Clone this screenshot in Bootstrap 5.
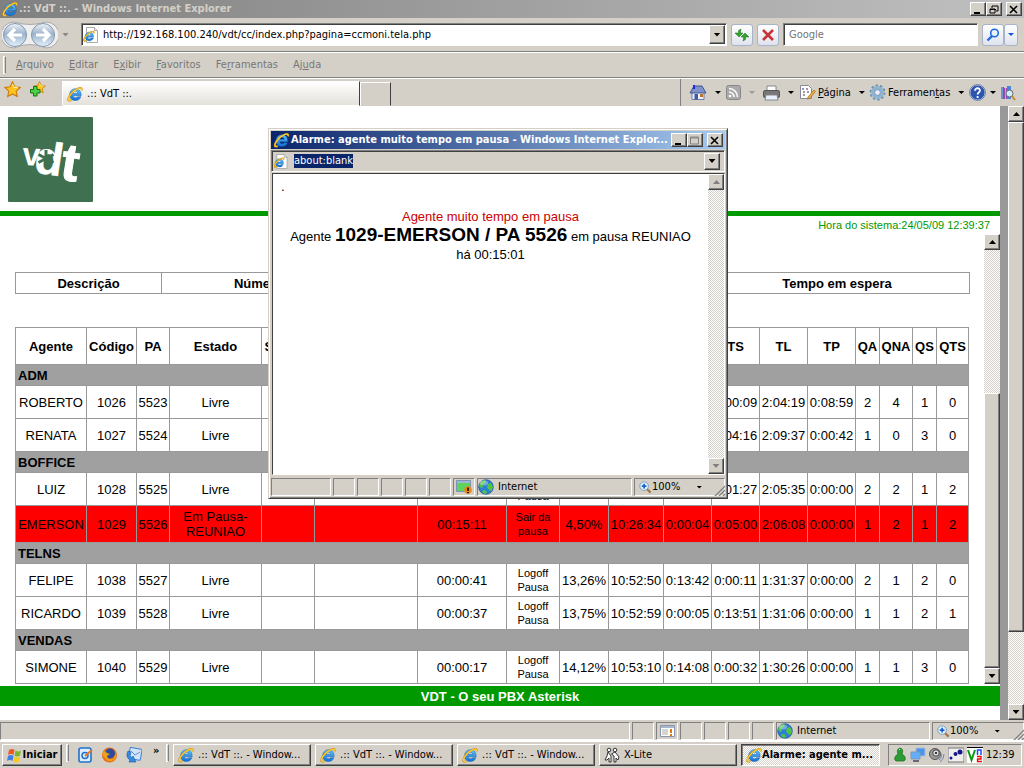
<!DOCTYPE html>
<html lang="pt-BR">
<head>
<meta charset="utf-8">
<meta name="viewport" content="width=device-width, initial-scale=1">
<title>.:: VdT ::. - Windows Internet Explorer</title>
<link href="https://cdn.jsdelivr.net/npm/bootstrap@5.3.0/dist/css/bootstrap.min.css" rel="stylesheet">
<style>
:root{--face:#d4d0c8;--shade:#808080;--dark:#404040;--line:#999}
body{font:11px/14px "DejaVu Sans Condensed","Noto Sans",sans-serif;color:#000;background:var(--face)}
button,input{font:inherit;color:inherit;padding:0;border:0;border-radius:0;background:none}
a{color:inherit;text-decoration:none}
svg{display:block;flex:none}
.raised{border:1px solid;border-color:#fff var(--dark) var(--dark) #fff;box-shadow:inset -1px -1px var(--shade);background:var(--face)}
.sunk{border:1px solid;border-color:var(--shade) #fff #fff var(--shade)}
.field{border:1px solid;border-color:var(--shade) #fff #fff var(--shade);box-shadow:inset 1px 1px var(--dark);background:#fff}
.dither{background:repeating-conic-gradient(#fff 0 25%,var(--face) 0 50%) 0 0/2px 2px}
.center{display:flex;align-items:center;justify-content:center}
.arrow{width:7px;height:4px;background:currentColor;clip-path:polygon(0 0,100% 0,50% 100%);flex:none}
.arrow-sm{width:6px;height:3px}
.arrow.up{transform:rotate(180deg)}
.titlebar{height:18px;padding:0 2px;gap:1px;font-weight:bold}
.titlebar.idle{background:linear-gradient(90deg,#808080,#c0c0c0);color:var(--face)}
.titlebar.live{background:linear-gradient(90deg,#0a246a,#a6caf0);color:#fff}
.capbtn{width:16px;height:14px}
.ruled{border-bottom:1px solid var(--shade);box-shadow:0 1px #fff}
.addrbar{height:34px;padding:0 6px 0 2px}
.urlbox{height:23px;padding-left:1px}
.dropbtn{width:16px;height:19px;margin-right:1px}
.softbtn{height:22px;border:1px solid #a9b3c9;border-radius:3px;background:linear-gradient(#fff,#dfe3ee)}
.menubar{height:25px;color:#777;gap:15px;margin-top:1px}
.grip{width:3px;height:18px;border:1px solid;border-color:#fff var(--shade) #fff #fff}
.tabrow{height:28px}
.tab-on{width:298px;height:25px;border:1px solid;border-color:#fff var(--dark) transparent #fff;background:linear-gradient(#fff,#e4e1db)}
.tab-new{width:31px;height:24px;border:1px solid;border-color:#fff var(--dark) transparent #fff}
.tools{display:grid;grid-template-columns:37px 37px 36px 70px 100px 31px 24px;border-left:1px solid var(--shade);padding-left:8px;height:27px;align-items:center}
.tools button{display:flex;align-items:center;text-align:left}
.site{font:13px/15px "Liberation Sans",Arial,sans-serif;background:#fff}
.site-head{height:105px;padding:11px 8px}
.stripe{height:5px;background:#090}
.clock{height:18px;font-size:11px;line-height:19px;color:#090;padding-right:10px}
.monitor{padding:38px 15px 0}
.site-foot{height:20px;line-height:22px;background:#090;color:#fff;margin:2px 0 14px;font-weight:bold;text-align:center}
.frame-edge{flex:none;width:8px;background:var(--line)}
.bar{flex:none;width:16px}
.bar button{width:16px;height:16px}
.grid-lines{width:100%;table-layout:fixed;border-collapse:collapse;text-align:center}
.grid-lines td,.grid-lines th{border:1px solid var(--line);padding:0;white-space:nowrap}
.queue th{height:21px}
.queue{margin-bottom:33px}
.agents tr{height:33px}
.agents thead tr,.agents .paused{height:37px}
.agents .group{height:21px;background:#a0a0a0;text-align:left}
.agents .group th{padding-left:2px}
.agents .paused{background:#f00}
.agents .act{font-size:11px;line-height:14px}
.statusbar{height:21px;padding-top:2px;gap:2px;border-bottom:1px solid #fff}
.pane{height:18px}
.pane.cell{width:22px}
.grow-tip{position:absolute;right:0;bottom:0}
.taskbar{height:27px;border-top:1px solid #fff;padding:2px 2px 0;gap:4px;align-items:flex-start}
.task{flex:0 1 138px;height:22px;padding:0 4px;text-align:left;overflow:hidden}
.task.on{flex-basis:139px;border-color:var(--dark) #fff #fff var(--dark);box-shadow:inset 1px 1px var(--shade);font-weight:bold}
.start{width:60px;height:22px;font-weight:bold}
.quick{width:89px;height:22px;gap:7px;padding-left:5px}
.tray{width:134px;height:22px;gap:3px;padding-left:4px}
.popup{position:absolute;left:268px;top:128px;width:460px;height:371px;padding:2px;background:var(--face);border:1px solid;border-color:var(--face) var(--dark) var(--dark) var(--face);box-shadow:inset 1px 1px #fff,inset -1px -1px var(--shade)}
.pop-url{height:22px;margin-top:1px;border:1px solid;border-color:var(--shade) #fff #fff var(--shade);box-shadow:inset 1px 1px var(--dark)}
.pop-url input{width:59px;height:14px;background:#0a246a;color:#fff}
.pop-url .raised{width:16px;height:17px}
.pop-body{border:1px solid;border-color:var(--dark) #fff #fff var(--dark);margin:1px 0 3px 1px}
.alarm{font:13px/18px "Liberation Sans",Arial,sans-serif;text-align:center;padding:4px 8px}
.alarm strong{font-size:19px}
.alarm .warn{color:#c00;margin-top:12px}
</style>
</head>
<body class="d-flex flex-column vh-100 overflow-hidden">
<svg width="0" height="0" class="position-absolute">
<defs>
<linearGradient id="gB" x1="0" y1="0" x2="0" y2="1"><stop offset="0" stop-color="#5cc4fa"/><stop offset="1" stop-color="#1470d4"/></linearGradient>
<linearGradient id="gN" x1="0" y1="0" x2="0" y2="1"><stop offset="0" stop-color="#eef4fa"/><stop offset=".45" stop-color="#9db3cc"/><stop offset="1" stop-color="#e3f1fc"/></linearGradient>
</defs>
<symbol id="ie" viewBox="0 0 16 16"><path d="M14.2 9.800H6.300c.2 1.400 1.100 2 2.300 2 1 0 1.700-.4 2.100-1h3.200c-.8 2.400-2.700 3.700-5.400 3.700-3.600 0-5.900-2.300-5.900-5.800 0-3.400 2.300-6 5.900-6 3.700 0 5.800 2.500 5.700 7.100zM10.700 7.300C10.600 6 9.800 5.200 8.500 5.200S6.500 6 6.300 7.300z" fill="url(#gB)" stroke="#0b4fa5" stroke-width=".4"/><path d="M14.500 4.400c.8-2.500-.8-3.200-3.600-1.900C7 4.300 2.800 8.600 1.500 12c-.9 2.500.4 3.300 2.900 2.100" fill="none" stroke="#d08e05" stroke-width="1.900"/><path d="M14.500 4.200c.6-2.200-.8-2.700-3.400-1.500C7 4.600 3 8.600 1.600 12c-.8 2.200.3 2.800 2.400 2" fill="none" stroke="#ffd23c" stroke-width="1.100"/></symbol>
<symbol id="iepage" viewBox="0 0 16 16"><path d="M3.500.5h8l3 3v12h-11z" fill="#fff" stroke="#aaa"/><path d="M11.500.5v3h3" fill="#eee" stroke="#aaa"/><svg x="0" y="3" width="12" height="12"><use href="#ie"/></svg></symbol>
<symbol id="globe" viewBox="0 0 16 16"><circle cx="8" cy="8" r="7.300" fill="#2d7fd6" stroke="#1c4c9c" stroke-width=".7"/><path d="M3 3c2-2 4-2 5-1.500L7 4 4.500 5.500 5 8 3 9 1.200 7C1.300 5 2 4 3 3zM10 5l3-1 2 4-1.500 4L11 11 9 8zM5 11l3 .5L9 14l-2 1-3-2z" fill="#4fc544"/><ellipse cx="6" cy="4" rx="4" ry="2.500" fill="#fff" opacity=".35"/></symbol>
<symbol id="mag" viewBox="0 0 14 14"><path d="M8 8l4.500 4.500" stroke="#a8763f" stroke-width="2.400"/><circle cx="5.500" cy="5.500" r="4.600" fill="#e1effb" stroke="#7d98b5"/><path d="M5.500 3v5M3 5.500h5" stroke="#1263c9" stroke-width="1.800"/></symbol>
<symbol id="tip" viewBox="0 0 12 12"><path d="M1 12L12 1M5 12l7-7M9 12l3-3" stroke="#fff" stroke-width="1"/><path d="M2 12L12 2M6 12l6-6M10 12l2-2" stroke="#808080" stroke-width="1.500"/></symbol>
<symbol id="star" viewBox="0 0 16 16"><path d="M8 .8l2.200 4.600 5 .7-3.700 3.500 1 5L8 12.200l-4.500 2.400 1-5L.8 6.100l5-.7z" fill="#ffc321" stroke="#cb7a07"/><path d="M8 2.500l1.300 3.500H13" stroke="#ffed9b" fill="none"/></symbol>
</svg>

<header>
<div class="titlebar idle d-flex align-items-center">
<svg width="16" height="16"><use href="#ie"/></svg><span class="flex-fill">.:: VdT ::. - Windows Internet Explorer</span>
<div class="d-flex">
<button class="raised capbtn center" aria-label="Minimizar"><svg width="10" height="9"><path d="M1 7h6v2H1z"/></svg></button>
<button class="raised capbtn center" aria-label="Restaurar"><svg width="10" height="9"><path d="M3 1h6v5H7M3 1v2M1 4h5v4H1zM1 4.500h6" fill="none" stroke="#000"/></svg></button>
<button class="raised capbtn center ms-1" aria-label="Fechar"><svg width="10" height="9"><path d="M1 1l7 7M8 1L1 8" stroke="#000" stroke-width="1.600"/></svg></button>
</div>
</div>
<div class="addrbar ruled d-flex align-items-center">
<svg width="56" height="28" viewBox="0 0 56 28"><path d="M12 1Q28 6 44 1A12 12 0 0144 27Q28 20 12 27A12 12 0 0112 1" fill="#efefef" stroke="#aaa"/><g fill="url(#gN)" stroke="#8496ac"><circle cx="13" cy="14" r="11.500"/><circle cx="41" cy="14" r="11.500"/></g><path d="M13 8l-6 6 6 6M7 14h13M41 8l6 6-6 6M47 14H34" fill="none" stroke="#fff" stroke-width="3.200"/></svg>
<i class="arrow ms-1 me-2" style="color:#888"></i>
<div class="urlbox field d-flex align-items-center flex-fill ms-1">
<svg width="16" height="16"><use href="#iepage"/></svg>
<input class="flex-fill ms-1" type="text" aria-label="Endereço" value="http://192.168.100.240/vdt/cc/index.php?pagina=ccmoni.tela.php">
<button class="raised dropbtn center" aria-label="Lista de endereços"><i class="arrow"></i></button>
</div>
<button class="softbtn center ms-1" style="width:22px" aria-label="Atualizar"><svg width="16" height="14"><path d="M7 1L4.500 2.500V5H1l4 4 4-4H6.500V3zM9 13l2.500-1.500V9H15l-4-4-4 4h2.500v2z" fill="#31a52b" stroke="#197014" stroke-width=".5"/></svg></button>
<button class="softbtn center ms-1" style="width:22px" aria-label="Parar"><svg width="12" height="12"><path d="M1 1l10 10M11 1L1 11" stroke="#c93338" stroke-width="2.600"/></svg></button>
<div class="urlbox field d-flex align-items-center ms-1" style="width:195px"><input class="w-100 ps-1" type="text" aria-label="Pesquisar" placeholder="Google"></div>
<div class="d-flex ms-1"><button class="softbtn center" style="width:22px" aria-label="Buscar"><svg width="14" height="14"><circle cx="8.500" cy="5" r="3.800" fill="#e8f3ff" stroke="#1e6be0" stroke-width="1.600"/><path d="M6 8l-4.500 4.500" stroke="#1e6be0" stroke-width="2.400"/></svg></button><button class="softbtn center" style="width:14px" aria-label="Opções de busca"><i class="arrow arrow-sm" style="color:#1356d8"></i></button></div>
</div>
<nav class="menubar ruled d-flex align-items-center">
<i class="grip" style="margin:0 -5px 0 3px"></i>
<a href="#"><u>A</u>rquivo</a><a href="#"><u>E</u>ditar</a><a href="#">E<u>x</u>ibir</a><a href="#"><u>F</u>avoritos</a><a href="#">Fe<u>r</u>ramentas</a><a href="#">Aj<u>u</u>da</a>
</nav>
<div class="tabrow d-flex align-items-end">
<button class="mb-1 ms-1 pb-1" aria-label="Favoritos"><svg width="17" height="17"><use href="#star"/></svg></button>
<button class="mb-1 ms-2 pb-1" aria-label="Adicionar a favoritos"><svg width="17" height="17"><svg x="4" width="13" height="13"><use href="#star"/></svg><path d="M4.500 5.500h3.500v3h3V12H8v3H4.500v-3h-3V8.500h3z" fill="#4fd046" stroke="#15780f"/></svg></button>
<div class="tab-on d-flex align-items-center ms-3 px-1"><svg width="16" height="16"><use href="#ie"/></svg><span class="ps-1">.:: VdT ::.</span></div>
<button class="tab-new" aria-label="Nova guia"></button>
<div class="tools ms-auto">
<button aria-label="Início"><svg width="18" height="17"><path d="M3 8v7.500h12V8" fill="#eef1f8" stroke="#6d7fa5"/><path d="M1 9l4-7h8l4 7z" fill="#7f93c8" stroke="#40568f"/><path d="M4 1h2v4H4z" fill="#22e"/><path d="M5.500 10H9v5.500H5.500z" fill="#3c5ba0"/><path d="M11 10h3v3h-3z" fill="#b8742b"/></svg><i class="arrow arrow-sm ms-2"></i></button>
<button aria-label="RSS"><svg width="15" height="15"><rect x=".5" y=".5" width="14" height="14" rx="2" fill="#aaa" stroke="#888"/><path d="M3 7a5 5 0 015 5M3 3.500A8.500 8.500 0 0111.500 12" fill="none" stroke="#fff" stroke-width="1.500"/><circle cx="4" cy="11" r="1.300" fill="#fff"/></svg><i class="arrow arrow-sm ms-2" style="color:#999"></i></button>
<button aria-label="Imprimir"><svg width="17" height="16"><path d="M4 1h9v5H4z" fill="#fff" stroke="#888"/><rect x=".5" y="5.500" width="16" height="7" rx="1.500" fill="#777" stroke="#555"/><path d="M3 10h11l1 5H2z" fill="#e8efff" stroke="#888"/></svg><i class="arrow arrow-sm ms-2"></i></button>
<button><svg width="17" height="17"><path d="M1.500 1.500h8l3 3v10h-11z" fill="#fff" stroke="#889"/><path d="M3 5h2M7 5h2M4 8h2M8 8h2M4 11h2" stroke="#335"/><path d="M15 6l1.500 1.500-6 7-2 .5.500-2z" fill="#f3b23b" stroke="#996515" stroke-width=".7"/></svg><span style="padding-left:2px"><u>P</u>ágina</span><i class="arrow arrow-sm ms-2"></i></button>
<button><svg width="17" height="17"><circle cx="8.500" cy="8.500" r="7" fill="none" stroke="#6692b5" stroke-width="2" stroke-dasharray="2.500 1.900"/><circle cx="8.500" cy="8.500" r="4.700" fill="none" stroke="#8fb4d0" stroke-width="3.500"/><circle cx="8.500" cy="8.500" r="2.800" fill="#eef" stroke="#557f9f" stroke-width=".7"/></svg><span style="padding-left:2px">Ferramen<u>t</u>as</span><i class="arrow arrow-sm ms-2"></i></button>
<button aria-label="Ajuda"><svg width="17" height="17"><circle cx="8.500" cy="8.500" r="7.500" fill="#2c56ad" stroke="#c5d2ea"/><circle cx="8.500" cy="8.500" r="7.900" fill="none" stroke="#26438c" stroke-width=".6"/><path d="M6 6.700C6 3.300 11.300 3.600 11 6.700 10.800 8.300 8.600 8.300 8.600 10.500M8.600 12v2" fill="none" stroke="#fff" stroke-width="1.800"/></svg><i class="arrow arrow-sm ms-1"></i></button>
<button aria-label="Pesquisa"><svg width="16" height="16"><path d="M1 2h3v12H1z" fill="#3d6fc4"/><path d="M4 3h3v11H4z" fill="#9a4bb0"/><path d="M7 1h4v13H7z" fill="#4a86d8"/><path d="M2 2v12M5.500 3v11" stroke="#dce8fa" stroke-width=".6"/><circle cx="9.500" cy="8.500" r="3.500" fill="#cfeffa" stroke="#667"/><path d="M12 11l3 4" stroke="#c78a2c" stroke-width="2"/></svg></button>
</div>
</div>
</header>

<main class="d-flex flex-fill site" style="min-height:0">
<div class="d-flex flex-column flex-fill" style="min-width:0">
<div class="site-head">
<svg width="85" height="85" role="img" aria-label="vdt"><rect width="85" height="85" fill="#3f704f" rx="1"/><g fill="#fff" stroke="#fff" font-family="Liberation Sans,sans-serif" font-weight="bold"><text x="14" y="48" font-size="32" stroke="none" transform="rotate(3 14 48)">v</text><text x="25" y="55" font-size="46" stroke-width=".5" transform="rotate(9 25 55)">d</text><text x="51" y="62" font-size="53" transform="rotate(9 51 62)">t</text></g><path d="M38 33v17M30.500 37.500l15 8M45.500 37.500l-15 8" stroke="#3f704f" stroke-width="3"/></svg>
</div>
<div class="stripe"></div>
<div class="clock text-end">Hora do sistema:24/05/09 12:39:37</div>
<div class="d-flex flex-fill" style="min-height:0">
<section class="monitor flex-fill overflow-hidden">
<table class="grid-lines queue">
<tr><th style="width:146px">Descrição</th><th style="width:194px">Número</th><th style="width:349px"></th><th style="width:265px">Tempo em espera</th></tr>
</table>
<table class="grid-lines agents">
<colgroup><col style="width:71px"><col style="width:50px"><col style="width:33px"><col style="width:92px"><col style="width:53px"><col style="width:103px"><col style="width:89px"><col style="width:53px"><col style="width:49px"><col style="width:55px"><col style="width:48px"><col style="width:48px"><col style="width:48px"><col style="width:48px"><col style="width:24px"><col style="width:33px"><col style="width:24px"><col style="width:32px"></colgroup>
<thead><tr><th>Agente</th><th>Código</th><th>PA</th><th>Estado</th><th>Serviço</th><th></th><th></th><th></th><th></th><th></th><th></th><th>TS</th><th>TL</th><th>TP</th><th>QA</th><th>QNA</th><th>QS</th><th>QTS</th></tr></thead>
<tbody>
<tr class="group"><th colspan="18">ADM</th></tr>
<tr><td>ROBERTO</td><td>1026</td><td>5523</td><td>Livre</td><td></td><td></td><td></td><td class="act"></td><td></td><td></td><td></td><td>0:00:09</td><td>2:04:19</td><td>0:08:59</td><td>2</td><td>4</td><td>1</td><td>0</td></tr>
<tr><td>RENATA</td><td>1027</td><td>5524</td><td>Livre</td><td></td><td></td><td></td><td class="act"></td><td></td><td></td><td></td><td>0:04:16</td><td>2:09:37</td><td>0:00:42</td><td>1</td><td>0</td><td>3</td><td>0</td></tr>
<tr class="group"><th colspan="18">BOFFICE</th></tr>
<tr><td>LUIZ</td><td>1028</td><td>5525</td><td>Livre</td><td></td><td></td><td></td><td class="act"><br><a href="#">Pausa</a></td><td></td><td></td><td></td><td>0:01:27</td><td>2:05:35</td><td>0:00:00</td><td>2</td><td>2</td><td>1</td><td>2</td></tr>
<tr class="paused"><td>EMERSON</td><td>1029</td><td>5526</td><td>Em Pausa-<br>REUNIAO</td><td></td><td></td><td>00:15:11</td><td class="act"><a href="#">Sair da<br>pausa</a></td><td>4,50%</td><td>10:26:34</td><td>0:00:04</td><td>0:05:00</td><td>2:06:08</td><td>0:00:00</td><td>1</td><td>2</td><td>1</td><td>2</td></tr>
<tr class="group"><th colspan="18">TELNS</th></tr>
<tr><td>FELIPE</td><td>1038</td><td>5527</td><td>Livre</td><td></td><td></td><td>00:00:41</td><td class="act"><a href="#">Logoff</a><br><a href="#">Pausa</a></td><td>13,26%</td><td>10:52:50</td><td>0:13:42</td><td>0:00:11</td><td>1:31:37</td><td>0:00:00</td><td>2</td><td>1</td><td>2</td><td>0</td></tr>
<tr><td>RICARDO</td><td>1039</td><td>5528</td><td>Livre</td><td></td><td></td><td>00:00:37</td><td class="act"><a href="#">Logoff</a><br><a href="#">Pausa</a></td><td>13,75%</td><td>10:52:59</td><td>0:00:05</td><td>0:13:51</td><td>1:31:06</td><td>0:00:00</td><td>1</td><td>1</td><td>2</td><td>1</td></tr>
<tr class="group"><th colspan="18">VENDAS</th></tr>
<tr><td>SIMONE</td><td>1040</td><td>5529</td><td>Livre</td><td></td><td></td><td>00:00:17</td><td class="act"><a href="#">Logoff</a><br><a href="#">Pausa</a></td><td>14,12%</td><td>10:53:10</td><td>0:14:08</td><td>0:00:32</td><td>1:30:26</td><td>0:00:00</td><td>1</td><td>1</td><td>3</td><td>0</td></tr>
</tbody>
</table>
</section>
<div class="bar d-flex flex-column"><button class="raised center" aria-label="Subir lista"><i class="arrow up"></i></button><div class="dither" style="flex:144"></div><div class="raised" style="flex:274"></div><button class="raised center" aria-label="Descer lista"><i class="arrow"></i></button></div>
</div>
<footer class="site-foot">VDT - O seu PBX Asterisk</footer>
</div>
<div class="frame-edge"></div>
<div class="bar d-flex flex-column"><button class="raised center" aria-label="Subir página"><i class="arrow up"></i></button><div class="raised" style="flex:510"></div><div class="dither" style="flex:72"></div><button class="raised center" aria-label="Descer página"><i class="arrow"></i></button></div>
</main>

<div class="statusbar d-flex position-relative">
<div class="pane sunk flex-fill"></div>
<div class="pane sunk cell"></div>
<div class="pane sunk cell center"><svg width="15" height="13"><path d="M.5 .5h14v11H.5z" fill="#fff" stroke="#8a97ad"/><path d="M1 2h13" stroke="#a9b7cc" stroke-width="2"/><path d="M2 5h6M2 7h6M2 9h6" stroke="#aaa"/><path d="M11 4v4M11 9v2" stroke="#e07a10" stroke-width="2"/></svg></div>
<div class="pane sunk cell"></div><div class="pane sunk cell"></div><div class="pane sunk cell"></div><div class="pane sunk cell"></div>
<div class="pane sunk d-flex align-items-center gap-1" style="width:154px"><svg width="16" height="16"><use href="#globe"/></svg>Internet</div>
<button class="pane sunk d-flex align-items-center ps-1" style="width:92px"><svg width="13" height="13"><use href="#mag"/></svg><span class="me-3">100%</span><i class="arrow arrow-sm"></i></button>
<svg class="grow-tip" width="12" height="12"><use href="#tip"/></svg>
</div>

<div class="taskbar d-flex">
<button class="raised start center"><svg width="16" height="15"><path d="M2 2q3-2 5.500 0L6.500 7Q4 5 1 7z" fill="#ea5a22"/><path d="M8.500 2.500q3 2 5.500 0l-1 5q-3 2-5.500 0z" fill="#78b82a"/><path d="M1 8q3-2 5.500 0l-1 5Q3 11 0 13z" fill="#3f7fe8"/><path d="M7.500 8.500q3 2 5.500 0l-1 5q-3 2-5.500 0z" fill="#f8c81c"/></svg>Iniciar</button>
<i class="grip"></i>
<div class="quick d-flex align-items-center">
<svg width="16" height="16"><rect x="1" y="1" width="12" height="14" rx="2" fill="#dceeff" stroke="#2271c9" stroke-width="1.600"/><circle cx="7" cy="8.500" r="3" fill="none" stroke="#2271c9" stroke-width="1.500"/><path d="M7 9l7-6" stroke="#df762b" stroke-width="2"/></svg>
<svg width="17" height="16"><circle cx="8.500" cy="8" r="7.500" fill="#e86d12"/><circle cx="9" cy="6.500" r="5" fill="#2b4c9d"/><path d="M1 7q1-3 3-3l2 2 3 1-3 2 1 3 5 0 3-6q1 6-4 8T1 7" fill="#ef9d1c"/></svg>
<svg width="17" height="16"><rect x="4" y="1" width="12" height="11" rx="1" fill="#cfe5fb" stroke="#3f7fd0" transform="rotate(10 8 8)"/><path d="M6 4l4 4 5-3" stroke="#5a8fd2" fill="none"/><path d="M3 4q-3 6 2 9l-1 2h7l-3-6-1 2Q4 9 6 5z" fill="#318be0" stroke="#1456a5" stroke-width=".6"/></svg>
<b class="ps-1 pb-2">»</b>
</div>
<i class="grip"></i>
<button class="raised task d-flex align-items-center gap-1"><svg width="16" height="16"><use href="#ie"/></svg><span class="text-truncate">.:: VdT ::. - Window...</span></button>
<button class="raised task d-flex align-items-center gap-1"><svg width="16" height="16"><use href="#ie"/></svg><span class="text-truncate">.:: VdT ::. - Window...</span></button>
<button class="raised task d-flex align-items-center gap-1"><svg width="16" height="16"><use href="#ie"/></svg><span class="text-truncate">.:: VdT ::. - Window...</span></button>
<button class="raised task d-flex align-items-center gap-1"><svg width="16" height="16"><g fill="#fff" stroke="#333"><circle cx="5" cy="3" r="1.800"/><circle cx="11" cy="3" r="1.800"/><path d="M4 5l3 4v6H5v-4l-2 2H1l2-4zM11 5l4 5-1 3-2-2v4h-2V9L7.500 7z"/></g></svg>X-Lite</button>
<button class="raised task on dither d-flex align-items-center"><svg width="16" height="16"><use href="#ie"/></svg><span class="text-nowrap">Alarme: agente m...</span></button>
<div class="sunk tray d-flex align-items-center ms-auto">
<svg width="14" height="16"><path d="M3 14q-2-1-1-4 1-2 3-3-2-5 2-6 4 1 2 6 2 1 3 3 1 3-1 4z" fill="#2d9c35" stroke="#176b1d" stroke-width=".7"/><path d="M6 3l1-1" stroke="#b9f0b9"/></svg>
<svg width="16" height="16"><path d="M6 1h9v8H6z" fill="#4a94ee" stroke="#a8bcd8"/><path d="M1 5h9v7H1z" fill="#62aef8" stroke="#7f97b8"/><path d="M3 14h6" stroke="#667" stroke-width="2"/></svg>
<svg width="16" height="16"><circle cx="6" cy="7" r="5.500" fill="#999" stroke="#555"/><circle cx="7" cy="6" r="3.200" fill="#ddd" stroke="#444"/><circle cx="7" cy="6" r="1" /><path d="M12 6q2 4-2 7M15 7q0 5-4 8" fill="none" stroke="#6c84bd"/></svg>
<svg width="16" height="16"><path d="M0 1h16v14H0z" fill="#eee" stroke="#777"/><g fill="#16168c"><circle cx="3" cy="11" r="1.500"/><circle cx="7.500" cy="7" r="2"/><circle cx="12" cy="5" r="2.500"/></g></svg>
<svg width="16" height="16"><path d="M0 0h16v16H0z" fill="#fff"/><path d="M0 .5h16" stroke="#000"/><path d="M1 3l3.500 10L8 3" fill="none" stroke="#0b9a18" stroke-width="2"/><path d="M10.500 8V3H14v5" fill="none" stroke="#1a49ff" stroke-width="1.500"/><path d="M10 9.500h4V12h-3.500v2.500H15" fill="none" stroke="#e00" stroke-width="1.300"/></svg>
<span>12:39</span>
</div>
</div>

<section class="popup d-flex flex-column" role="dialog" aria-label="Alarme">
<div class="titlebar live d-flex align-items-center">
<svg width="17" height="16"><use href="#ie"/></svg><span class="flex-fill text-nowrap">Alarme: agente muito tempo em pausa - Windows Internet Explor...</span>
<div class="d-flex text-black">
<button class="raised capbtn center" aria-label="Minimizar"><svg width="10" height="9"><path d="M1 7h6v2H1z"/></svg></button>
<button class="raised capbtn center" aria-label="Maximizar"><svg width="10" height="9"><path d="M.5 1h8v7h-8z" fill="none" stroke="#808080"/><path d="M1 2h7" stroke="#808080"/></svg></button>
<button class="raised capbtn center ms-1" aria-label="Fechar"><svg width="10" height="9"><path d="M1 1l7 7M8 1L1 8" stroke="#000" stroke-width="1.600"/></svg></button>
</div>
</div>
<div class="pop-url d-flex align-items-center pe-1">
<svg width="18" height="15"><use href="#iepage"/></svg><input class="ms-1" type="text" aria-label="Endereço do alarme" value="about:blank">
<button class="raised center ms-auto" aria-label="Endereços"><i class="arrow"></i></button>
</div>
<div class="pop-body d-flex flex-fill bg-white">
<div class="alarm flex-fill">
<div class="text-start">.</div>
<div class="warn">Agente muito tempo em pausa</div>
<div>Agente <strong>1029-EMERSON / PA 5526</strong> em pausa REUNIAO</div>
<div>há 00:15:01</div>
</div>
<div class="bar dither d-flex flex-column justify-content-between" style="color:#808080"><button class="raised center" aria-label="Subir"><i class="arrow up"></i></button><button class="raised center" aria-label="Descer"><i class="arrow"></i></button></div>
</div>
<div class="d-flex position-relative" style="gap:2px">
<div class="pane sunk" style="width:60px"></div><div class="pane sunk cell"></div><div class="pane sunk cell"></div><div class="pane sunk cell"></div><div class="pane sunk cell"></div><div class="pane sunk cell"></div>
<div class="pane sunk cell center"><svg width="16" height="15"><path d="M.5 .5h14v11H.5z" fill="#5fd45c" stroke="#7b95b5"/><path d="M1 2h13" stroke="#9fb6d4" stroke-width="2"/><circle cx="12" cy="10" r="3.800" fill="#e88a12"/><path d="M12 7.500V11M12 12v1.300" stroke="#000" stroke-width="1.500"/></svg></div>
<div class="pane sunk d-flex align-items-center gap-1 flex-fill"><svg width="16" height="16"><use href="#globe"/></svg>Internet</div>
<button class="pane sunk d-flex align-items-center ps-1" style="width:91px"><svg width="13" height="13"><use href="#mag"/></svg><span class="me-3">100%</span><i class="arrow arrow-sm"></i></button>
<svg class="grow-tip" width="12" height="12"><use href="#tip"/></svg>
</div>
</section>
<script src="https://cdn.jsdelivr.net/npm/bootstrap@5.3.0/dist/js/bootstrap.bundle.min.js"></script>
</body>
</html>
